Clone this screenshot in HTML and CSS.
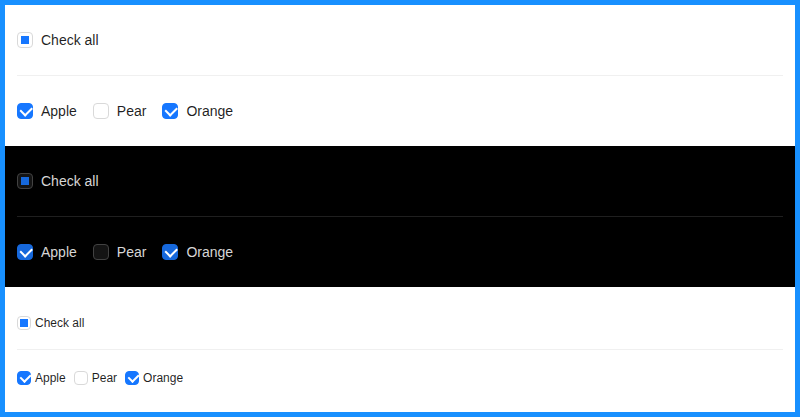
FILE: index.html
```html
<!DOCTYPE html>
<html>
<head>
<meta charset="utf-8">
<link rel="stylesheet" href="styles.css">
</head>
<body>
<div class="frame">
  <section class="panel">
    <label class="cb"><span class="box indet"></span><span class="txt">Check all</span></label>
    <div class="divider"></div>
    <div class="group">
      <label class="cb"><span class="box checked"></span><span class="txt">Apple</span></label>
      <label class="cb"><span class="box"></span><span class="txt">Pear</span></label>
      <label class="cb"><span class="box checked"></span><span class="txt">Orange</span></label>
    </div>
  </section>
  <section class="panel dark">
    <label class="cb"><span class="box indet"></span><span class="txt">Check all</span></label>
    <div class="divider"></div>
    <div class="group">
      <label class="cb"><span class="box checked"></span><span class="txt">Apple</span></label>
      <label class="cb"><span class="box"></span><span class="txt">Pear</span></label>
      <label class="cb"><span class="box checked"></span><span class="txt">Orange</span></label>
    </div>
  </section>
  <section class="panel small">
    <label class="cb"><span class="box indet"></span><span class="txt">Check all</span></label>
    <div class="divider"></div>
    <div class="group">
      <label class="cb"><span class="box checked"></span><span class="txt">Apple</span></label>
      <label class="cb"><span class="box"></span><span class="txt">Pear</span></label>
      <label class="cb"><span class="box checked"></span><span class="txt">Orange</span></label>
    </div>
  </section>
</div>
</body>
</html>
```
FILE: styles.css
```css
* { box-sizing: border-box; }
html, body { margin: 0; padding: 0; }
body {
  font-family: "Liberation Sans", Arial, sans-serif;
  font-size: 14px;
  color: rgba(0, 0, 0, 0.88);
}
.frame {
  width: 800px;
  height: 417px;
  border: 5px solid #1890ff;
  display: flex;
  flex-direction: column;
}
.panel {
  background: #fff;
  padding: 24px 12px;
  display: flex;
  flex-direction: column;
  align-items: flex-start;
  height: 141px;
}
.cb {
  display: inline-flex;
  align-items: center;
  line-height: 22px;
  height: 22px;
  margin-right: 8px;
}
.box {
  position: relative;
  width: 16px;
  height: 16px;
  border: 1px solid #d9d9d9;
  border-radius: 4px;
  background: #fff;
  flex: none;
}
.txt { padding: 0 8px; }
.box.checked {
  background: #1677ff;
  border-color: #1677ff;
}
.box.checked::after {
  content: "";
  position: absolute;
  left: 22%;
  top: 50%;
  width: 5.71px;
  height: 9.14px;
  border: 2px solid #fff;
  border-top: 0;
  border-left: 0;
  transform: rotate(45deg) translate(-50%, -50%);
}
.box.indet::after {
  content: "";
  position: absolute;
  left: 3px;
  top: 3px;
  width: 8px;
  height: 8px;
  background: #1677ff;
}
.divider {
  align-self: stretch;
  height: 1px;
  background: rgba(5, 5, 5, 0.06);
  margin: 24px 0;
}
.group { display: flex; }

.dark { background: #000; color: rgba(255, 255, 255, 0.85); }
.dark .box { background: #141414; border-color: #424242; }
.dark .box.checked { background: #1668dc; border-color: #1668dc; }
.dark .box.indet::after { background: #1668dc; }
.dark .divider { background: rgba(253, 253, 253, 0.12); }

.small {
  font-size: 12px;
  height: 125px;
  padding: 26px 12px 24px;
}
.small .cb { line-height: 20px; height: 20px; margin-right: 4px; }
.small .box { width: 14px; height: 14px; }
.small .txt { padding: 0 4px; }
.small .box.indet::after { left: 2px; top: 2px; width: 8px; height: 8px; }
.small .box.checked::after {
  width: 5px;
  height: 8px;
}
.small .divider { margin: 16px 0 18px; }
```
